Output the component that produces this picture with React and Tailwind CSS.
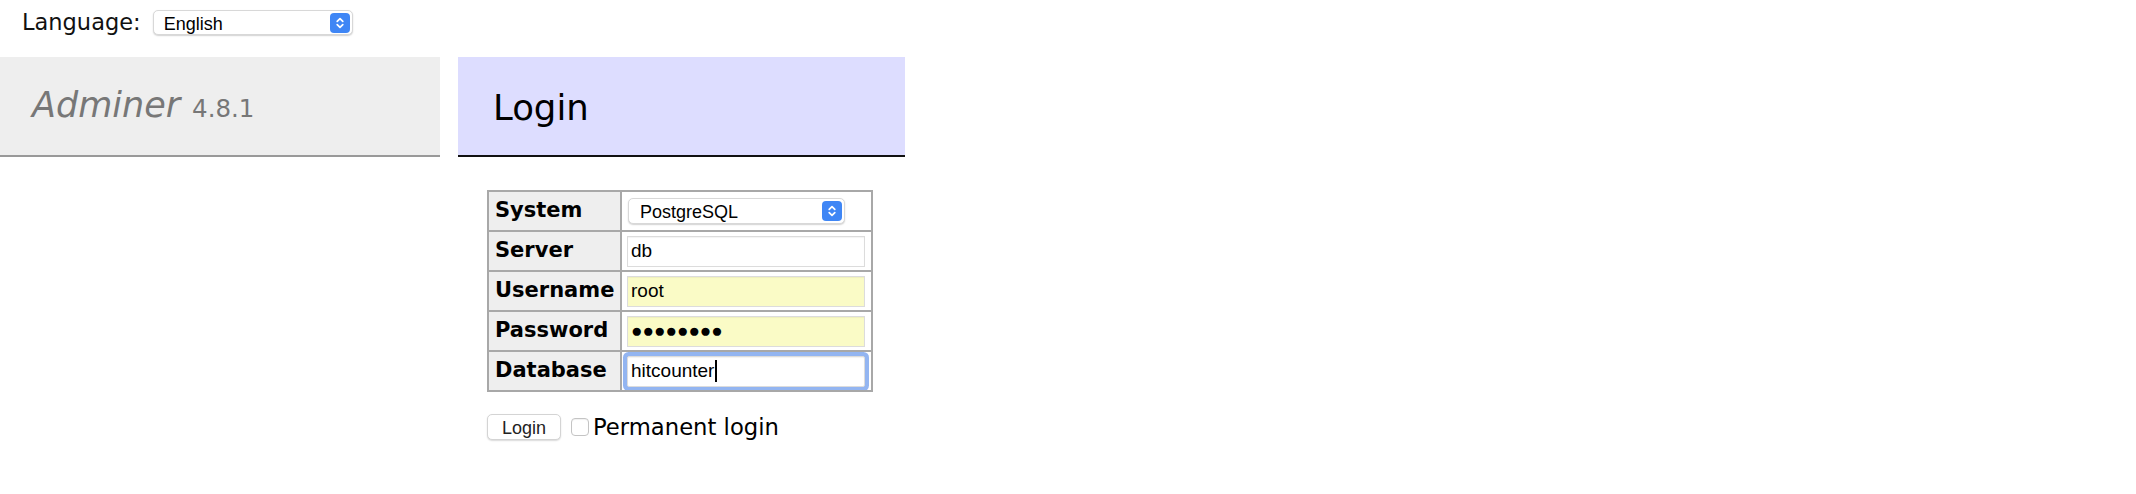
import React from 'react';

function Stepper() {
  return (
    <span className="pointer-events-none absolute right-[3px] top-1/2 flex h-[20px] w-[20px] -translate-y-1/2 items-center justify-center rounded-[4px] bg-[#3f86f5]">
      <svg width="10" height="14" viewBox="0 0 10 14" fill="none" stroke="white" strokeWidth="1.7" strokeLinecap="round" strokeLinejoin="round">
        <path d="M2.2 5.4 5 2.6 7.8 5.4" />
        <path d="M2.2 8.6 5 11.4 7.8 8.6" />
      </svg>
    </span>
  );
}

function MacSelect({ value, options, className, padClass }) {
  return (
    <div className={`relative ${className}`}>
      <select
        defaultValue={value}
        className={`h-full w-full appearance-none rounded-[5px] border border-[#d8d8d8] bg-white text-[18px] text-black shadow-[0_1px_1.5px_rgba(0,0,0,0.18)] outline-none font-['Liberation_Sans',Arial,sans-serif] ${padClass}`}
      >
        {options.map((o) => (
          <option key={o}>{o}</option>
        ))}
      </select>
      <Stepper />
    </div>
  );
}

const field =
  "h-[31px] w-[238px] border border-[#dcdcdc] px-[3px] text-[19px] text-black outline-none font-['Liberation_Sans',Arial,sans-serif] shadow-[inset_0_1px_1px_rgba(0,0,0,0.05)]";

function Row({ label, children }) {
  return (
    <tr className="h-[40px]">
      <th className="w-[133px] border-2 border-[#a8a8a8] bg-[#eee] pl-[6px] text-left align-middle text-[21px] font-bold">
        {label}
      </th>
      <td className="w-[251px] border-2 border-[#a8a8a8] pl-[5px] pr-[3px] align-middle">{children}</td>
    </tr>
  );
}

export default function App() {
  return (
    <div className="min-h-[494px] w-full bg-white text-black font-['DejaVu_Sans',Verdana,sans-serif]">
      <div className="flex h-[45px] items-center gap-[12px] pl-[22px]">
        <span className="text-[22.5px] text-[#111]">Language:</span>
        <MacSelect value="English" options={['English', 'Deutsch', 'Français']} className="h-[25px] w-[200px]" padClass="pl-[10px]" />
      </div>

      <div className="mt-[12px] flex gap-[18px]">
        <div className="w-[440px] shrink-0">
          <h1 className="flex h-[100px] items-baseline border-b-2 border-[#999] bg-[#eee] pl-[32px] pt-[31px] font-normal text-[#777]">
            <span className="text-[35px] italic leading-none">Adminer</span>
            <span className="ml-[12px] text-[24.5px] leading-none">4.8.1</span>
          </h1>
        </div>

        <div className="w-[447px] shrink-0">
          <h2 className="h-[100px] border-b-2 border-[#111] bg-[#ddf] pl-[35px] pt-[33px] text-[35.5px] font-normal leading-none">
            Login
          </h2>

          <form className="ml-[29px] mt-[33px]">
            <table className="border-collapse border-2 border-[#a8a8a8]">
              <tbody>
                <Row label="System">
                  <MacSelect
                    value="PostgreSQL"
                    options={['MySQL', 'SQLite 3', 'PostgreSQL', 'Oracle (beta)', 'MS SQL (beta)']}
                    className="ml-[1px] h-[26px] w-[217px]"
                    padClass="pl-[11px]"
                  />
                </Row>
                <Row label="Server">
                  <input className={`${field} bg-white`} defaultValue="db" readOnly />
                </Row>
                <Row label="Username">
                  <input className={`${field} bg-[#fafbc6]`} defaultValue="root" readOnly />
                </Row>
                <Row label="Password">
                  <input
                    className={`${field} bg-[#fafbc6] text-[18px] text-[#111]`}
                    defaultValue="●●●●●●●●"
                    readOnly
                  />
                </Row>
                <Row label="Database">
                  <div className={`${field} flex items-center rounded-[2px] border-[#7da2e6] bg-white ring-4 ring-[#93b5f1]`}>
                    <span>hitcounter</span>
                    <span className="ml-[1px] h-[22px] w-[1.5px] bg-black" />
                  </div>
                </Row>
              </tbody>
            </table>

            <div className="mt-[22px] flex items-center">
              <button
                type="button"
                className="h-[26px] w-[74px] rounded-[5px] border border-[#d4d4d4] bg-white text-[18px] text-[#222] shadow-[0_1px_1.5px_rgba(0,0,0,0.15)] font-['Liberation_Sans',Arial,sans-serif]"
              >
                Login
              </button>
              <label className="ml-[10px] flex items-center">
                <input
                  type="checkbox"
                  className="h-[18px] w-[18px] appearance-none rounded-[4px] border border-[#c4c4c4] bg-white shadow-[inset_0_1px_1px_rgba(0,0,0,0.06)]"
                />
                <span className="ml-[4px] text-[22.7px] leading-none">Permanent login</span>
              </label>
            </div>
          </form>
        </div>
      </div>
    </div>
  );
}
